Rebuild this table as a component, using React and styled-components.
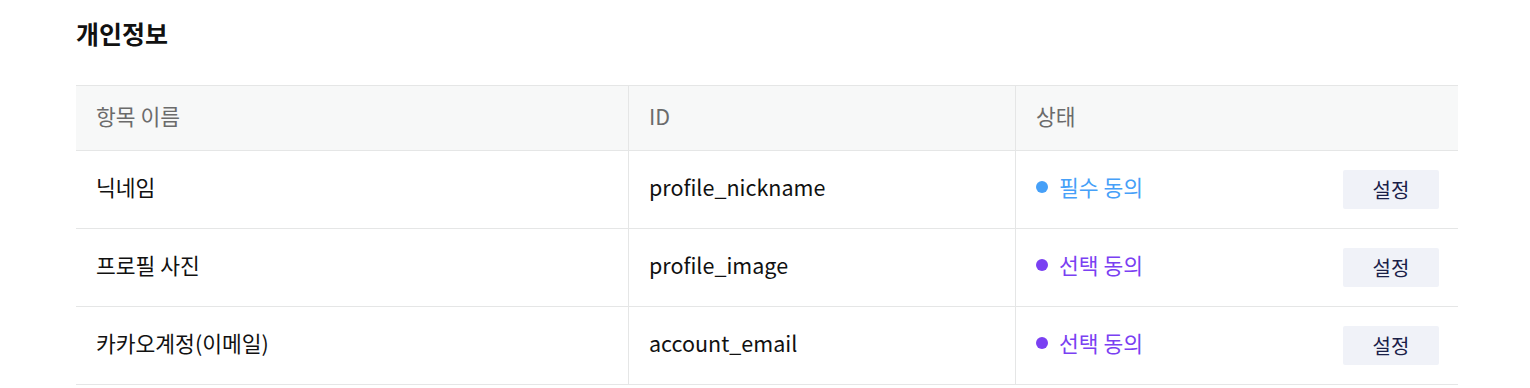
import React from "react";
import styled, { createGlobalStyle } from "styled-components";

const Global = createGlobalStyle`
  html, body { margin: 0; padding: 0; background: #fff; }
  body { font-family: "Noto Sans CJK KR", "Noto Sans", sans-serif; color: #111; }
`;

const Page = styled.div`
  padding: 17px 72px 0 76px;
`;

const Title = styled.h2`
  margin: 0 0 36px;
  font-size: 25px;
  font-weight: 700;
  line-height: 32px;
  color: #111;
`;

const Table = styled.div`
  display: grid;
  grid-template-columns: 552px 387px 443px;
  border-top: 1px solid #e5e6e6;
`;

const Cell = styled.div`
  display: flex;
  align-items: center;
  height: ${(p) => (p.$head ? "65px" : "78px")};
  padding: 0 19px 6px 20px;
  box-sizing: border-box;
  border-bottom: 1px solid #e5e6e6;
  border-left: ${(p) => (p.$first ? "none" : "1px solid #e5e6e6")};
  background: ${(p) => (p.$head ? "#f7f8f8" : "#fff")};
  color: ${(p) => (p.$head ? "#6b6b6b" : "#111")};
  font-size: 21.5px;
  justify-content: ${(p) => (p.$split ? "space-between" : "flex-start")};
`;

const Status = styled.span`
  display: inline-flex;
  align-items: center;
  gap: 11px;
  color: ${(p) => p.$color};
`;

const Dot = styled.span`
  width: 12px;
  height: 12px;
  border-radius: 50%;
  background: ${(p) => p.$color};
`;

const Button = styled.button`
  width: 96px;
  height: 39px;
  margin-top: 6px;
  border: none;
  border-radius: 2px;
  background: #f0f2f8;
  color: #1a2048;
  font-family: inherit;
  font-size: 20px;
  cursor: pointer;
`;

const rows = [
  { name: "닉네임", id: "profile_nickname", status: "필수 동의", color: "#46a0f8" },
  { name: "프로필 사진", id: "profile_image", status: "선택 동의", color: "#7a40f2" },
  { name: "카카오계정(이메일)", id: "account_email", status: "선택 동의", color: "#7a40f2" },
];

export default function App() {
  return (
    <>
      <Global />
      <Page>
        <Title>개인정보</Title>
        <Table>
          <Cell $head $first>항목 이름</Cell>
          <Cell $head>ID</Cell>
          <Cell $head>상태</Cell>
          {rows.map((r) => (
            <React.Fragment key={r.id}>
              <Cell $first>{r.name}</Cell>
              <Cell>{r.id}</Cell>
              <Cell $split>
                <Status $color={r.color}>
                  <Dot $color={r.color} />
                  {r.status}
                </Status>
                <Button>설정</Button>
              </Cell>
            </React.Fragment>
          ))}
        </Table>
      </Page>
    </>
  );
}
